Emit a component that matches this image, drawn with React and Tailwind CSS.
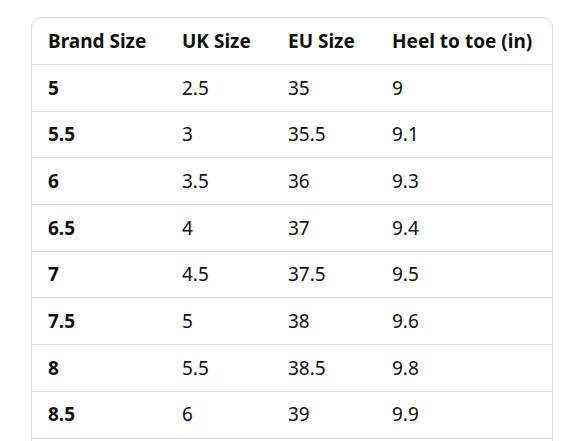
export default function App() {
  const rows = [
    ["5", "2.5", "35", "9"],
    ["5.5", "3", "35.5", "9.1"],
    ["6", "3.5", "36", "9.3"],
    ["6.5", "4", "37", "9.4"],
    ["7", "4.5", "37.5", "9.5"],
    ["7.5", "5", "38", "9.6"],
    ["8", "5.5", "38.5", "9.8"],
    ["8.5", "6", "39", "9.9"],
  ];
  const cols = "grid grid-cols-[135px_106px_104px_1fr]";
  return (
    <div className="h-[441px] w-[588px] overflow-hidden bg-white" style={{ fontFamily: '"Noto Sans", sans-serif' }}>
      <div className="ml-[31px] mt-[17px] h-[460px] w-[522px] rounded-[10px] border border-[#dde1e1] text-[19px] text-[#0f1111]">
        <div className={`${cols} h-[47px] items-center border-b border-[#dde1e1] font-bold`}>
          <div className="pl-[16px]">Brand Size</div>
          <div className="pl-[15px]">UK Size</div>
          <div className="pl-[15px]">EU Size</div>
          <div className="pl-[15px]">Heel to toe (in)</div>
        </div>
        {rows.map((r, i) => (
          <div key={i} className={`${cols} h-[46.7px] items-center border-b border-[#dde1e1]`}>
            <div className="pl-[16px] font-bold">{r[0]}</div>
            <div className="pl-[15px]">{r[1]}</div>
            <div className="pl-[15px]">{r[2]}</div>
            <div className="pl-[15px]">{r[3]}</div>
          </div>
        ))}
      </div>
    </div>
  );
}
